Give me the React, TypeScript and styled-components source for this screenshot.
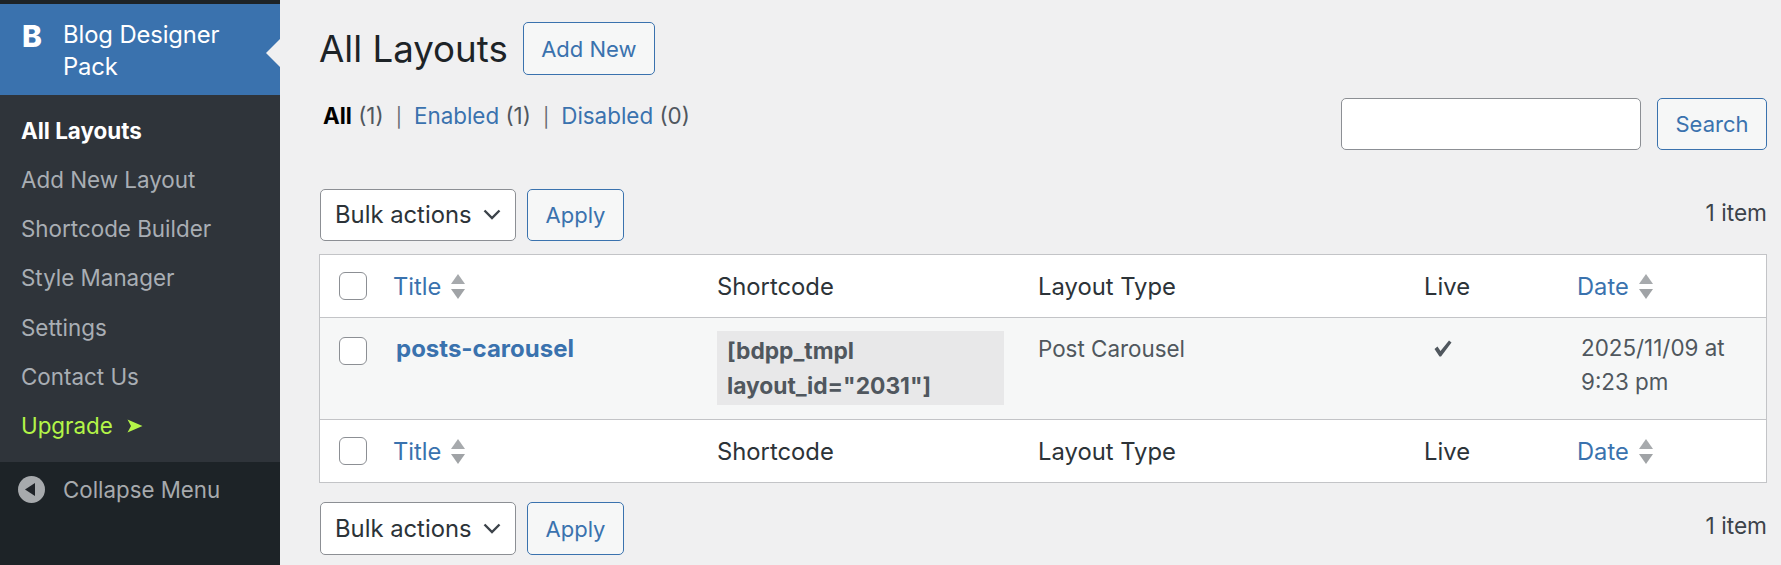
import React from 'react'
import styled, { createGlobalStyle } from 'styled-components'

const GlobalStyle = createGlobalStyle`
  html, body {
    margin: 0;
    padding: 0;
    background: #f0f0f1;
    overflow: hidden;
  }
  * {
    box-sizing: border-box;
  }
`

const MENU = ['All Layouts', 'Add New Layout', 'Shortcode Builder', 'Style Manager', 'Settings', 'Contact Us']

const App = () => {
  return (
    <Page>
      <GlobalStyle />
      <Sidebar>
        <Brand>
          <BrandIcon>B</BrandIcon>
          <BrandName>Blog Designer Pack</BrandName>
          <BrandArrow />
        </Brand>
        <Menu>
          {MENU.map((item, i) => (
            <MenuItem key={item} $current={i === 0}>{item}</MenuItem>
          ))}
          <UpgradeItem>
            Upgrade
            <svg width="16" height="14" viewBox="0 0 16 14"><path d="M0.5 0.5L15.5 7L0.5 13.5L4 7Z" fill="#b4f548" /></svg>
          </UpgradeItem>
        </Menu>
        <Collapse>
          <svg width="27" height="27" viewBox="0 0 27 27">
            <circle cx="13.5" cy="13.5" r="13.5" fill="#a7aaad" />
            <path d="M7 13.5L17 7V20Z" fill="#1f2328" />
          </svg>
          <span>Collapse Menu</span>
        </Collapse>
      </Sidebar>
      <Main>
        <Header>
          <Title>All Layouts</Title>
          <OutlineButton $w={132} $h={53}>Add New</OutlineButton>
        </Header>
        <FilterRow>
          <Filters>
            <strong>All</strong> <Count>(1)</Count>
            <Sep>|</Sep>
            <FilterLink>Enabled</FilterLink> <Count>(1)</Count>
            <Sep>|</Sep>
            <FilterLink>Disabled</FilterLink> <Count>(0)</Count>
          </Filters>
          <SearchBox>
            <SearchInput />
            <OutlineButton $w={110} $h={52}>Search</OutlineButton>
          </SearchBox>
        </FilterRow>
        <TableNav />
        <ListTable>
          <HeadRow />
          <BodyRow>
            <CheckCell $top><Check /></CheckCell>
            <PostTitle>posts-carousel</PostTitle>
            <div>
              <Code>[bdpp_tmpl layout_id="2031"]</Code>
            </div>
            <BodyText>Post Carousel</BodyText>
            <LiveCell>
              <svg width="18" height="17" viewBox="0 0 18 17"><path d="M0.5 9L3.5 6.5L6.5 11L15 0.5L17.5 2.5L7 16.5H5.5Z" fill="#50575e" /></svg>
            </LiveCell>
            <DateCell>2025/11/09 at 9:23 pm</DateCell>
          </BodyRow>
          <HeadRow />
        </ListTable>
        <TableNav $bottom />
      </Main>
    </Page>
  )
}

export default App

const SortIcon = () => (
  <svg width="14" height="25" viewBox="0 0 14 25">
    <path d="M7 0L14 10H0Z" fill="#a7aaad" />
    <path d="M0 15H14L7 25Z" fill="#a0a3a6" />
  </svg>
)

const HeadRow = () => (
  <HeadGrid>
    <CheckCell><Check /></CheckCell>
    <SortLink>Title <SortIcon /></SortLink>
    <HeadText>Shortcode</HeadText>
    <HeadText>Layout Type</HeadText>
    <HeadText>Live</HeadText>
    <SortLink>Date <SortIcon /></SortLink>
  </HeadGrid>
)

const TableNav = ({ $bottom = false }: { $bottom?: boolean }) => (
  <NavRow $bottom={$bottom}>
    <NavLeft>
      <BulkSelect $bottom={$bottom}>
        Bulk actions
        <svg width="18" height="11" viewBox="0 0 18 11" fill="none"><path d="M1.5 1.5L9 9L16.5 1.5" stroke="#3c434a" strokeWidth="2.4" /></svg>
      </BulkSelect>
      <OutlineButton $w={97} $h={$bottom ? 53 : 52}>Apply</OutlineButton>
    </NavLeft>
    <ItemCount>1 item</ItemCount>
  </NavRow>
)

const FONT = `Inter, "Liberation Sans", sans-serif`
const COLUMNS = '62px 323px 321px 386px 154px 1fr'

const Page = styled.div`
  display: flex;
  height: 565px;
  font-family: ${FONT};
  background: #f0f0f1;
`

const Sidebar = styled.aside`
  width: 280px;
  flex: none;
  display: flex;
  flex-direction: column;
  padding-top: 4px;
  background: #1d2327;
`

const Brand = styled.div`
  position: relative;
  display: flex;
  height: 91px;
  padding: 15px 20px 0 22px;
  background: #3a72ae;
  color: #fff;
`

const BrandIcon = styled.div`
  width: 41px;
  flex: none;
  font-size: 30px;
  font-weight: 800;
  line-height: 35px;
`

const BrandName = styled.div`
  font-size: 23.8px;
  line-height: 32px;
  letter-spacing: -0.1px;
`

const BrandArrow = styled.span`
  position: absolute;
  right: 0;
  top: 35px;
  border-style: solid;
  border-width: 14px 14px 14px 0;
  border-color: transparent #f0f0f1 transparent transparent;
`

const Menu = styled.nav`
  height: 367px;
  padding-top: 10.5px;
  background: #2f343a;
`

const MenuItem = styled.div<{ $current?: boolean }>`
  height: 49.25px;
  padding-left: 21px;
  font-size: 22.4px;
  line-height: 49px;
  color: ${({ $current }) => ($current ? '#fff' : '#a9aeb4')};
  font-weight: ${({ $current }) => ($current ? 700 : 400)};
`

const UpgradeItem = styled(MenuItem)`
  display: flex;
  align-items: center;
  gap: 14px;
  color: #b4f548;
`

const Collapse = styled.div`
  display: flex;
  align-items: center;
  gap: 18px;
  padding: 14px 0 0 18px;
  font-size: 22.3px;
  color: #a7aaad;
`

const Main = styled.main`
  flex: 1;
  min-width: 0;
  padding: 22px 14px 0 40px;
`

const Header = styled.div`
  display: flex;
  align-items: center;
  gap: 15px;
`

const Title = styled.h1`
  margin: 0 0 0 -1px;
  font-size: 36.7px;
  font-weight: 400;
  line-height: 53px;
  color: #1d2327;
`

const OutlineButton = styled.div<{ $w: number; $h: number }>`
  flex: none;
  display: flex;
  align-items: center;
  justify-content: center;
  width: ${({ $w }) => $w}px;
  height: ${({ $h }) => $h}px;
  border: 1.5px solid #3a72ae;
  border-radius: 5px;
  background: #f6f7f7;
  color: #3a72ae;
  font-size: 22px;
`

const FilterRow = styled.div`
  display: flex;
  justify-content: space-between;
  margin-top: 23px;
`

const Filters = styled.div`
  padding: 2px 0 0 3px;
  font-size: 22.4px;
  line-height: 32px;
  white-space: pre-wrap;
  color: #000;
  strong {
    font-weight: 700;
  }
`

const Count = styled.span`
  color: #50575e;
`

const Sep = styled.span`
  margin: 0 12px;
  color: #646970;
  font-size: 19px;
`

const FilterLink = styled.span`
  color: #3a72ae;
`

const SearchBox = styled.div`
  display: flex;
  gap: 16px;
`

const SearchInput = styled.div`
  width: 300px;
  height: 52px;
  border: 1.5px solid #8c8f94;
  border-radius: 5px;
  background: #fff;
`

const NavRow = styled.div<{ $bottom: boolean }>`
  display: flex;
  justify-content: space-between;
  margin-top: ${({ $bottom }) => ($bottom ? '19px' : '39px')};
  margin-bottom: ${({ $bottom }) => ($bottom ? '0' : '13px')};
`

const NavLeft = styled.div`
  display: flex;
  gap: 11px;
`

const BulkSelect = styled.div<{ $bottom: boolean }>`
  display: flex;
  align-items: center;
  justify-content: space-between;
  width: 196px;
  padding: 0 14px ${({ $bottom }) => ($bottom ? '0' : '2px')} 14px;
  border: 1.5px solid #8c8f94;
  border-radius: 5px;
  background: #fff;
  color: #2c3338;
  font-size: 23.8px;
`

const ItemCount = styled.div`
  padding-top: 11px;
  font-size: 22.7px;
  line-height: 26px;
  color: #3c434a;
`

const ListTable = styled.div`
  margin-left: -1px;
  background: #fff;
  border: 1px solid #c3c4c7;
`

const HeadGrid = styled.div`
  display: grid;
  grid-template-columns: ${COLUMNS};
  align-items: center;
  height: 62px;
`

const BodyRow = styled.div`
  display: grid;
  grid-template-columns: ${COLUMNS};
  height: 103px;
  padding-top: 13px;
  background: #f6f7f7;
  border-top: 1px solid #c3c4c7;
  border-bottom: 1px solid #c3c4c7;
`

const CheckCell = styled.div<{ $top?: boolean }>`
  display: flex;
  justify-content: flex-end;
  padding-right: 15px;
  margin-top: ${({ $top }) => ($top ? '6px' : '0')};
`

const Check = styled.span`
  display: block;
  width: 28px;
  height: 28px;
  border: 1.5px solid #8c8f94;
  border-radius: 6px;
  background: #fff;
`

const SortLink = styled.div`
  display: flex;
  align-items: center;
  gap: 10px;
  padding-left: 11px;
  font-size: 23.7px;
  color: #3a72ae;
`

const HeadText = styled.div`
  padding-left: 12px;
  font-size: 23.8px;
  color: #2c3338;
`

const PostTitle = styled.div`
  padding-left: 14px;
  font-size: 24px;
  font-weight: 700;
  line-height: 36px;
  color: #3a72ae;
`

const Code = styled.code`
  display: block;
  width: 287px;
  height: 74px;
  margin-left: 12px;
  padding: 2px 10px;
  background: #e8e8e9;
  font-family: ${FONT};
  font-size: 22.8px;
  font-weight: 700;
  line-height: 35px;
  color: #50575e;
`

const BodyText = styled.div`
  padding-left: 12px;
  font-size: 22.4px;
  line-height: 36px;
  color: #50575e;
`

const LiveCell = styled.div`
  padding: 9px 0 0 22px;
`

const DateCell = styled(BodyText)`
  padding-left: 15px;
  padding-right: 20px;
  line-height: 34px;
`
